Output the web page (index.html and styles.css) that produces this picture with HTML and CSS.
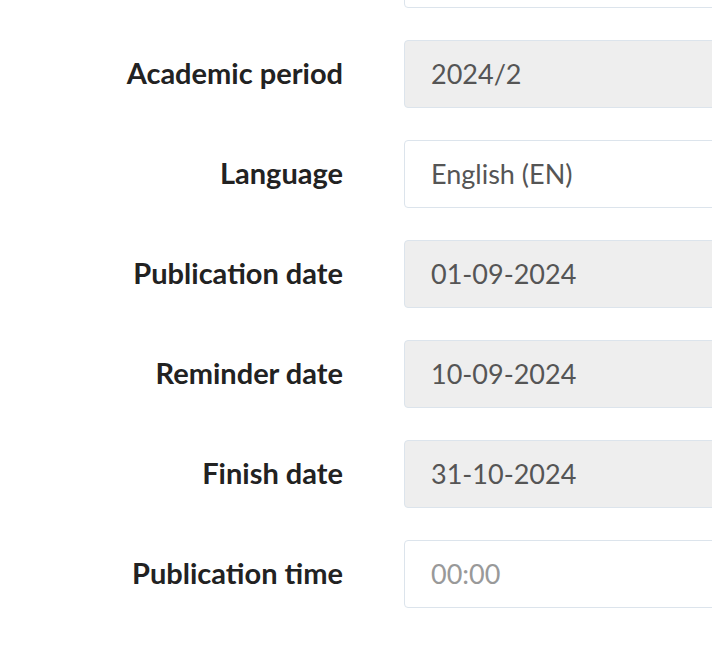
FILE: index.html
```html
<!DOCTYPE html>
<html lang="en">
<head>
<meta charset="utf-8">
<link rel="stylesheet" href="styles.css">
</head>
<body>
<form class="form">
  <div class="row">
    <span class="label"></span>
    <div class="field"></div>
  </div>
  <div class="row">
    <label class="label">Academic period</label>
    <div class="field disabled">2024/2</div>
  </div>
  <div class="row">
    <label class="label">Language</label>
    <div class="field">English (EN)</div>
  </div>
  <div class="row">
    <label class="label">Publication date</label>
    <div class="field disabled">01-09-2024</div>
  </div>
  <div class="row">
    <label class="label">Reminder date</label>
    <div class="field disabled">10-09-2024</div>
  </div>
  <div class="row">
    <label class="label">Finish date</label>
    <div class="field disabled">31-10-2024</div>
  </div>
  <div class="row">
    <label class="label">Publication time</label>
    <div class="field placeholder">00:00</div>
  </div>
</form>
</body>
</html>
```
FILE: styles.css
```css
html, body {
  margin: 0;
  padding: 0;
  background: #ffffff;
  overflow: hidden;
}
body {
  width: 712px;
  height: 648px;
  font-family: Lato, "Open Sans", sans-serif;
}
.form {
  margin-top: -60px;
  width: 1000px;
  display: flex;
  flex-direction: column;
  gap: 32px;
}
.row {
  display: grid;
  grid-template-columns: 343px 1fr;
  column-gap: 61px;
  align-items: center;
}
.label {
  text-align: right;
  font-weight: 700;
  font-size: 29px;
  line-height: 36px;
  color: #222222;
  padding-bottom: 3px;
}
.field {
  box-sizing: border-box;
  height: 68px;
  border: 1px solid #dce4ec;
  border-radius: 4px;
  background: #ffffff;
  padding-left: 26px;
  padding-bottom: 2px;
  display: flex;
  align-items: center;
  font-size: 27px;
  color: #555555;
}
.field.disabled {
  background: #eeeeee;
}
.field.placeholder {
  color: #999999;
}
```
